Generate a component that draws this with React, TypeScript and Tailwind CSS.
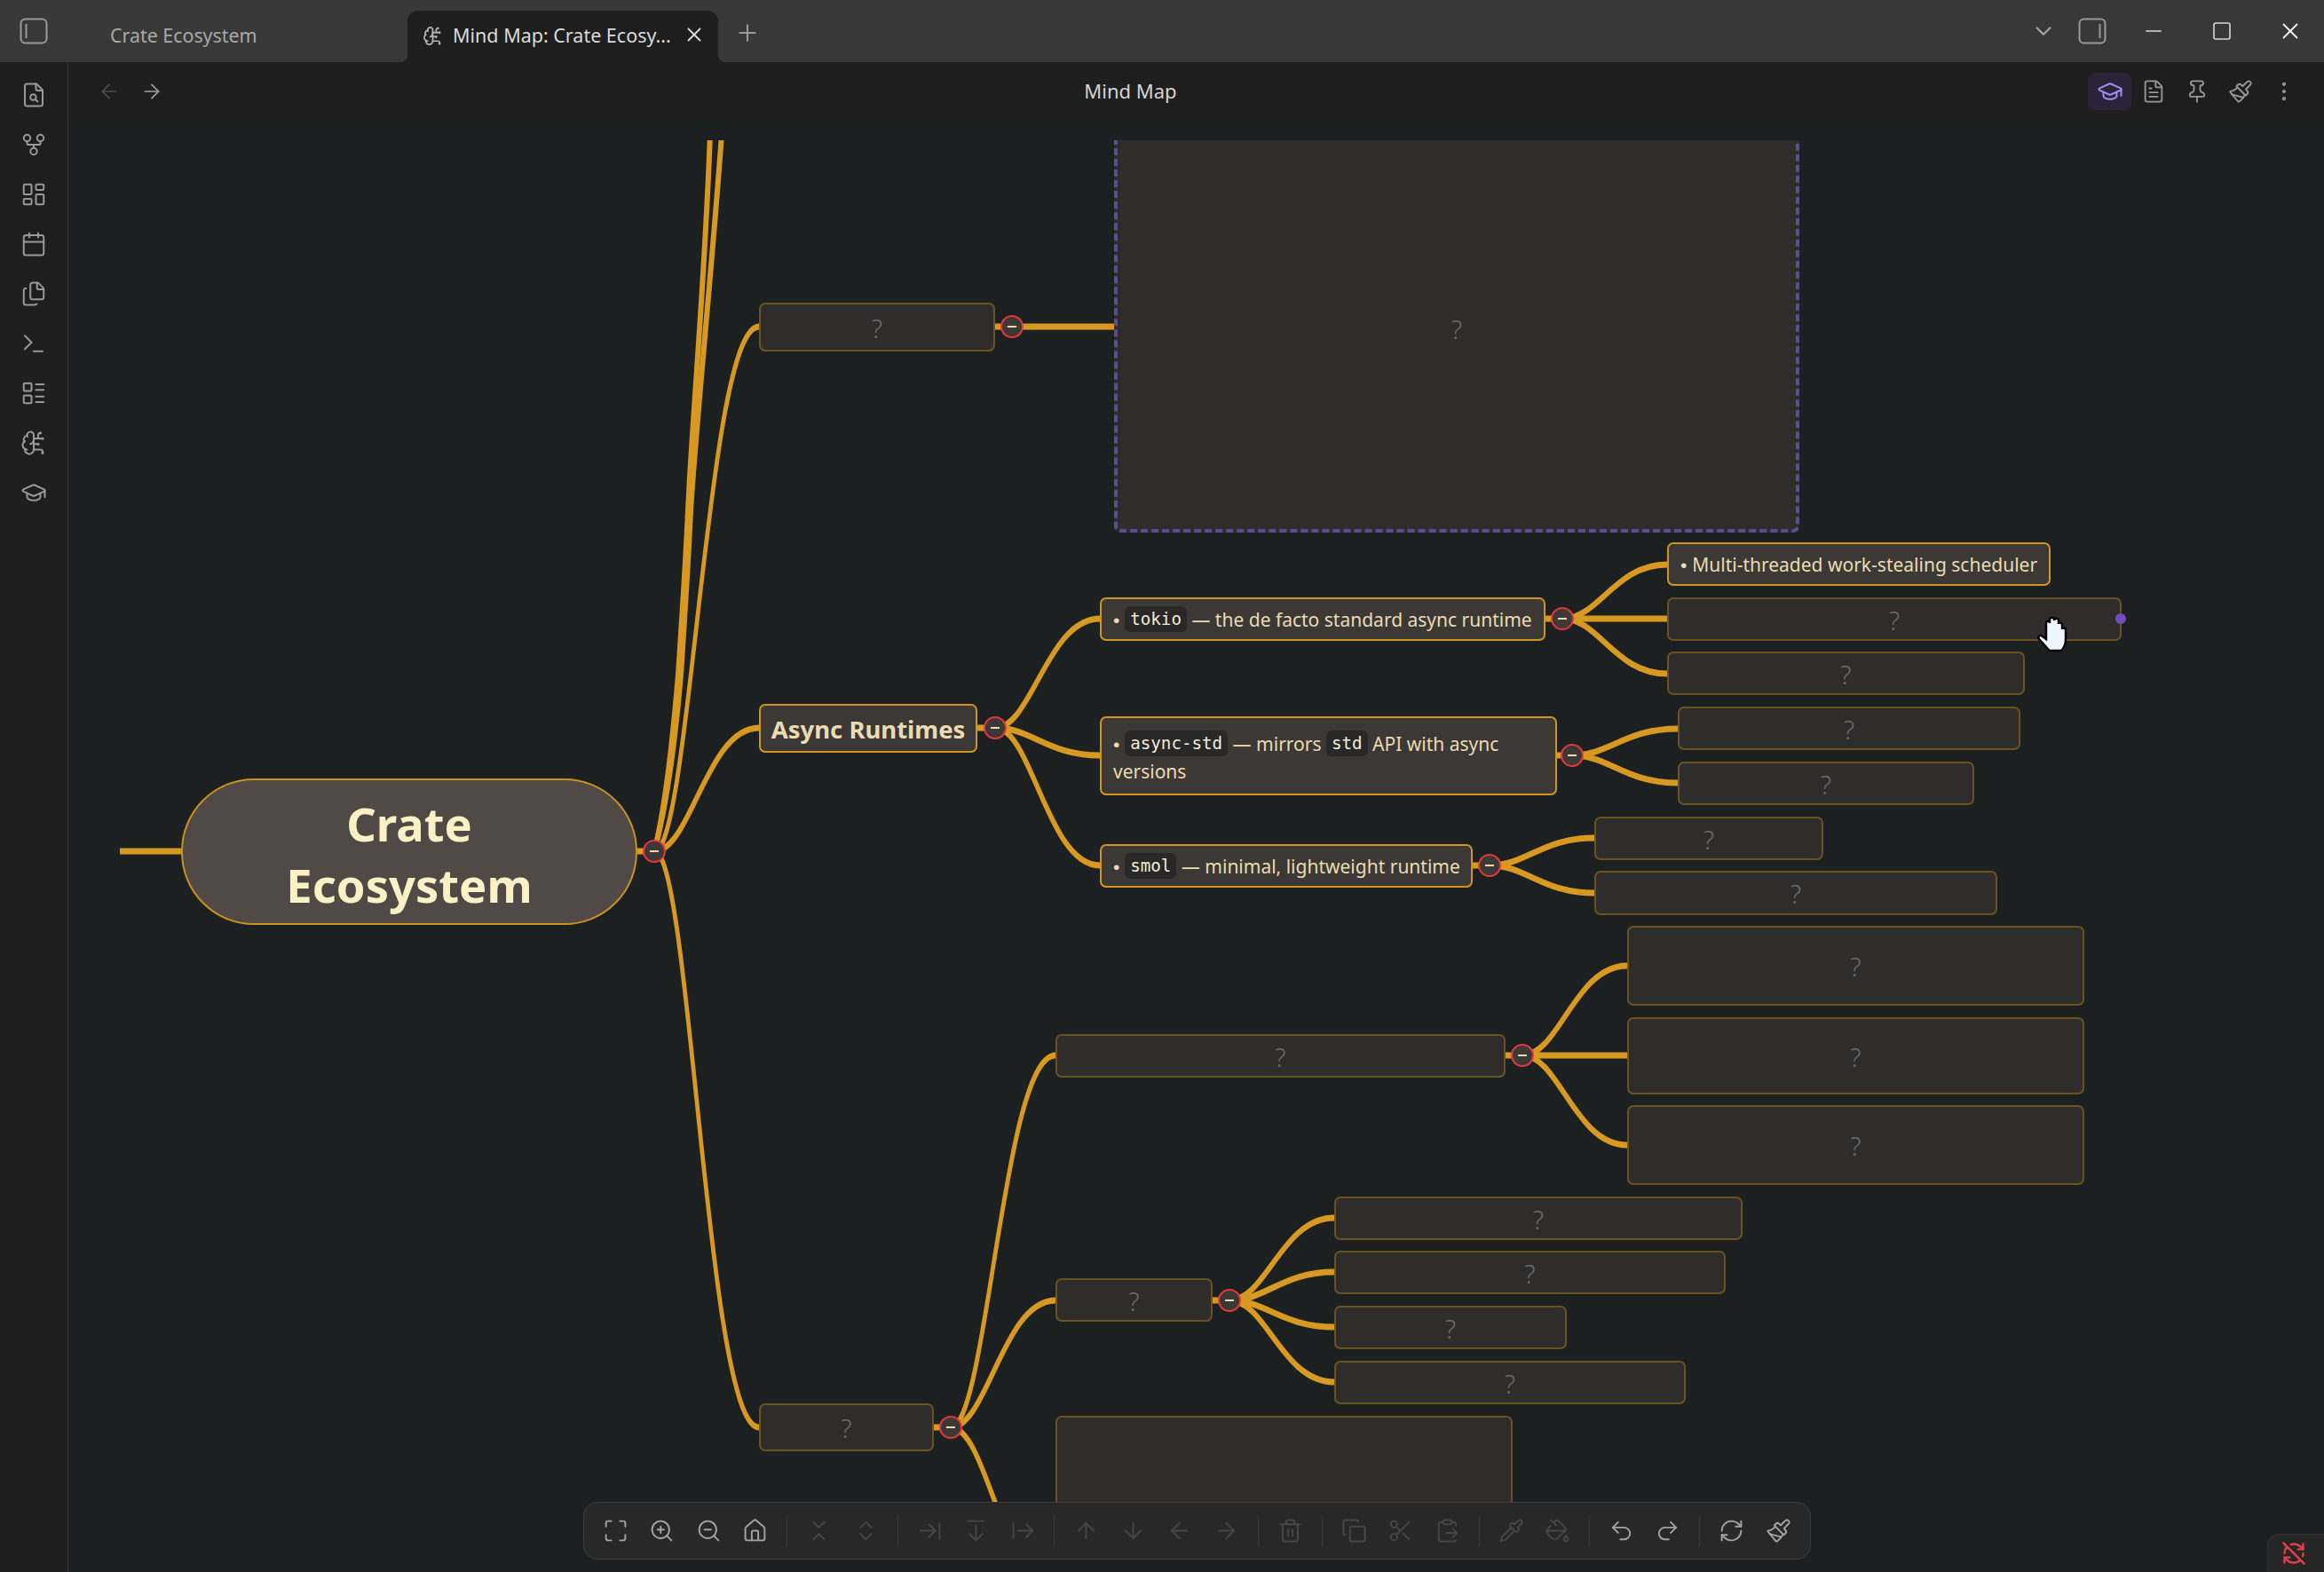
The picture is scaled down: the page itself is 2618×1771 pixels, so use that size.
import React from 'react';
import {
  ArrowDown, ArrowDownFromLine, ArrowLeft, ArrowRight, ArrowRightFromLine, ArrowRightToLine, ArrowUp,
  BrainCircuit, Calendar, ChevronDown, ChevronsDownUp, ChevronsUpDown, ClipboardPaste, Copy, EllipsisVertical,
  FileText, Files, GitFork, GraduationCap, House, LayoutDashboard, LayoutList, Maximize, Minus,
  PaintBucket, Paintbrush, Pin, Pipette, Plus, Redo2, RefreshCw, RefreshCwOff, Scissors, Square, Terminal,
  Trash2, Undo2, X, ZoomIn, ZoomOut,
} from 'lucide-react';

const GOLD = '#d79921';
const MAP_X = 77;
const MAP_Y = 158;

type Box = { x0: number; y0: number; x1: number; y1: number; big?: boolean };

// hidden flash-card nodes, page coordinates
const hidden: Box[] = [
  { x0: 855, y0: 341, x1: 1121, y1: 396 },
  { x0: 1878, y0: 673, x1: 2390, y1: 722 },
  { x0: 1878, y0: 734, x1: 2281, y1: 783 },
  { x0: 1890, y0: 796, x1: 2276, y1: 845 },
  { x0: 1890, y0: 858, x1: 2224, y1: 907 },
  { x0: 1796, y0: 920, x1: 2054, y1: 969 },
  { x0: 1796, y0: 981, x1: 2250, y1: 1031 },
  { x0: 1189, y0: 1165, x1: 1696, y1: 1214 },
  { x0: 1833, y0: 1043, x1: 2348, y1: 1133 },
  { x0: 1833, y0: 1146, x1: 2348, y1: 1233 },
  { x0: 1833, y0: 1245, x1: 2348, y1: 1335 },
  { x0: 1189, y0: 1440, x1: 1366, y1: 1489 },
  { x0: 1503, y0: 1348, x1: 1963, y1: 1397 },
  { x0: 1503, y0: 1409, x1: 1944, y1: 1458 },
  { x0: 1503, y0: 1471, x1: 1765, y1: 1520 },
  { x0: 1503, y0: 1533, x1: 1899, y1: 1582 },
  { x0: 855, y0: 1581, x1: 1052, y1: 1635 },
];

const branches: [number, number, number, number][] = [
  [737, 959, 855, 368],
  [737, 959, 855, 820],
  [737, 959, 855, 1608],
  [1121, 820, 1239, 697],
  [1121, 820, 1239, 851],
  [1121, 820, 1239, 975],
  [1760, 697, 1878, 636],
  [1760, 697, 1878, 697],
  [1760, 697, 1878, 759],
  [1771, 851, 1890, 821],
  [1771, 851, 1890, 882],
  [1678, 975, 1796, 944],
  [1678, 975, 1796, 1006],
  [1071, 1608, 1189, 1189],
  [1071, 1608, 1189, 1465],
  [1071, 1608, 1189, 1790],
  [1715, 1189, 1833, 1088],
  [1715, 1189, 1833, 1189],
  [1715, 1189, 1833, 1290],
  [1385, 1465, 1503, 1372],
  [1385, 1465, 1503, 1433],
  [1385, 1465, 1503, 1495],
  [1385, 1465, 1503, 1557],
];

// short straight bits: node edge to its fold button
const stubs: [number, number, number][] = [
  [135, 204, 959], [718, 737, 959], [1121, 1257, 368], [1101, 1121, 820], [1741, 1760, 697],
  [1753, 1771, 851], [1659, 1678, 975], [1052, 1071, 1608], [1696, 1715, 1189], [1366, 1385, 1465],
];

const folds: [number, number][] = [
  [737, 959], [1140, 368], [1121, 820], [1760, 697], [1771, 851], [1678, 975], [1071, 1608], [1715, 1189], [1385, 1465],
];

const curve = (x0: number, y0: number, x1: number, y1: number) => {
  const dx = x1 - x0;
  const c0 = x0 + dx * 0.35;
  const c1 = x1 - dx * 0.5;
  const t = 1.25;
  return `M${x0} ${y0 - t}C${c0} ${y0 - t} ${c1} ${y1 - t} ${x1} ${y1 - t}L${x1} ${y1 + t}C${c1} ${y1 + t} ${c0} ${y0 + t} ${x0} ${y0 + t}Z`;
};

const place = (b: Box) => ({
  left: b.x0 - MAP_X,
  top: b.y0 - MAP_Y,
  width: b.x1 - b.x0,
  height: b.y1 - b.y0,
});

const Code = ({ children }: { children: React.ReactNode }) => (
  <code className="inline-block h-[29px] rounded-[6px] bg-[#282828] px-[6px] align-top font-['DejaVu_Sans_Mono',monospace] text-[19.2px] leading-[29px] text-[#f2ebd5]">
    {children}
  </code>
);

const Bullet = () => <span className="font-['Liberation_Sans',sans-serif]">• </span>;

const Hidden = ({ box }: { box: Box }) => (
  <div
    style={place(box)}
    className="absolute flex items-center justify-center rounded-[7px] border-2 border-[#6a5320] bg-[#2e2d2b] pt-[2px] text-[29px] font-light text-[#6a6a6a]"
  >
    ?
  </div>
);

const Node = ({ box, className, children }: { box: Box; className?: string; children: React.ReactNode }) => (
  <div
    style={place(box)}
    className={`absolute rounded-[7px] border-2 border-[#cf9520] bg-[#3c3836] text-[#ebdbb2] ${className ?? ''}`}
  >
    {children}
  </div>
);

const PanelIcon = ({ right }: { right?: boolean }) => (
  <svg width="32" height="30" viewBox="0 0 32 30" fill="none" stroke="#999" strokeWidth="2">
    <rect x="1.5" y="1.5" width="29" height="27" rx="5" />
    <path d={right ? 'M24.5 7v16' : 'M7.5 7v16'} />
  </svg>
);

const FileSearchIcon = () => (
  <svg width="30" height="30" viewBox="0 0 24 24" fill="none" stroke="#999" strokeWidth="1.6" strokeLinecap="round" strokeLinejoin="round">
    <path d="M6 2h8.5L20 7.5V20a2 2 0 0 1-2 2H6a2 2 0 0 1-2-2V4a2 2 0 0 1 2-2Z" />
    <path d="M14 2v4a2 2 0 0 0 2 2h4" />
    <circle cx="11.5" cy="14" r="2.6" />
    <path d="M13.5 16l2 2" />
  </svg>
);

const sideIcons = [GitFork, LayoutDashboard, Calendar, Files, Terminal, LayoutList, BrainCircuit, GraduationCap];

const Tool = ({ icon: Icon, off }: { icon: typeof X; off?: boolean }) => (
  <div className="flex h-full w-[52.5px] items-center justify-center">
    <Icon size={29} strokeWidth={1.6} className={off ? 'text-[#474747]' : 'text-[#a3a3a3]'} />
  </div>
);

const Sep = () => <div className="mx-[9.2px] h-[35px] w-px bg-[#3a3a3a]" />;

export default function App() {
  return (
    <div className="relative flex h-[1771px] w-[2618px] flex-col overflow-hidden bg-[#1e1e1e] font-['Noto_Sans',sans-serif]">
      {/* title bar */}
      <div className="flex h-[70px] shrink-0 bg-[#383838]">
        <div className="flex w-[76px] items-center justify-center">
          <PanelIcon />
        </div>
        <div className="w-[383px] pl-[48px] pt-[23px] text-[21.4px] leading-[34px] text-[#a8a8a8]">Crate Ecosystem</div>
        <div className="relative mt-[12px] flex h-[58px] w-[350px] items-center rounded-t-[12px] bg-[#1e1e1e] pb-[1px] pl-[17px]">
          <div className="absolute bottom-0 left-[-8px] h-[8px] w-[8px] bg-[radial-gradient(circle_at_0_0,transparent_8px,#1e1e1e_8px)]" />
          <div className="absolute bottom-0 right-[-8px] h-[8px] w-[8px] bg-[radial-gradient(circle_at_100%_0,transparent_8px,#1e1e1e_8px)]" />
          <BrainCircuit size={23} strokeWidth={1.8} className="shrink-0 text-[#b5b5b5]" />
          <span className="ml-[11px] whitespace-nowrap text-[21.5px] text-[#dadada]">Mind Map: Crate Ecosy...</span>
          <X size={26} strokeWidth={1.7} className="absolute left-[310px] top-[14px] text-[#dadada]" />
        </div>
        <div className="flex w-[66px] items-center justify-center pt-[3px]">
          <Plus size={30} strokeWidth={1.6} className="text-[#9a9a9a]" />
        </div>
        <div className="flex-1" />
        <div className="flex w-[50px] items-center justify-center">
          <ChevronDown size={30} strokeWidth={1.6} className="text-[#a8a8a8]" />
        </div>
        <div className="flex w-[60px] items-center justify-center">
          <PanelIcon right />
        </div>
        <div className="flex w-[77px] items-center justify-center">
          <Minus size={28} strokeWidth={1.4} className="text-[#d8d8d8]" />
        </div>
        <div className="flex w-[77px] items-center justify-center">
          <Square size={24} strokeWidth={1.6} absoluteStrokeWidth className="text-[#d8d8d8]" />
        </div>
        <div className="flex w-[77px] items-center justify-center">
          <X size={30} strokeWidth={1.5} className="text-[#eeeeee]" />
        </div>
      </div>

      <div className="flex min-h-0 flex-1">
        {/* ribbon */}
        <div className="flex w-[77px] shrink-0 flex-col items-center border-r border-[#363636] bg-[#1e1e1e] pt-[9px] pr-px">
          <div className="flex h-[56px] items-center justify-center">
            <FileSearchIcon />
          </div>
          {sideIcons.map((Icon, i) => (
            <div key={i} className="flex h-[56px] items-center justify-center">
              <Icon size={30} strokeWidth={1.6} className="text-[#999999]" />
            </div>
          ))}
        </div>

        <div className="relative flex min-w-0 flex-1 flex-col">
          {/* view header */}
          <div className="flex h-[65px] shrink-0 items-center bg-[#1e1e1e] pl-[22px] pr-[21px]">
            <div className="flex w-[48px] justify-center">
              <ArrowLeft size={26} strokeWidth={1.6} className="text-[#4e4e4e]" />
            </div>
            <div className="flex w-[48px] justify-center">
              <ArrowRight size={26} strokeWidth={1.6} className="text-[#a0a0a0]" />
            </div>
            <div className="flex-1 text-center text-[22px] text-[#d4d4d4]">Mind Map</div>
            <div className="flex h-[42px] w-[49px] items-center justify-center rounded-[8px] bg-[#2a2438]">
              <GraduationCap size={30} strokeWidth={1.6} className="text-[#a68af9]" />
            </div>
            {[FileText, Pin, Paintbrush, EllipsisVertical].map((Icon, i) => (
              <div key={i} className="flex w-[49px] justify-center">
                <Icon size={28} strokeWidth={1.6} className="text-[#999999]" />
              </div>
            ))}
          </div>

          {/* mind map canvas */}
          <div className="relative min-h-0 flex-1 bg-[#1d2021]">
            <div className="absolute left-0 right-0 top-[23px] h-[1542px] overflow-hidden">
              <svg className="absolute left-0 top-0" width="2541" height="1542" viewBox="77 158 2541 1542">
                <g fill={GOLD} stroke={GOLD} strokeWidth="4.5">
                  {branches.map(([a, b, c, d], i) => (
                    <path key={i} d={curve(a, b, c, d)} />
                  ))}
                </g>
                {stubs.map(([a, b, y], i) => (
                  <rect key={i} x={a} y={y - 3.5} width={b - a} height="7" fill={GOLD} />
                ))}
                <g fill="none" stroke={GOLD} strokeWidth="6">
                  <path d="M737 959C751 905 759 820 764 760C768 700 772 640 775 576C779 480 794 320 800 150" />
                  <path d="M737 959C752 905 762 820 767 760C771 700 775 640 778 576C783 490 805 270 813 150" />
                </g>
              </svg>

              {/* flash-card box being revealed */}
              <div
                style={place({ x0: 1255, y0: 139, x1: 2027, y1: 600 })}
                className="absolute flex items-center justify-center rounded-[7px] border-4 border-dashed border-[#5b4e8c] bg-[#2e2d2b] pt-[2px] text-[29px] font-light text-[#6a6a6a]"
              >
                ?
              </div>

              {hidden.map((b, i) => (
                <Hidden key={i} box={b} />
              ))}
              <div
                style={place({ x0: 1189, y0: 1595, x1: 1704, y1: 1760 })}
                className="absolute rounded-[7px] border-2 border-[#6a5320] bg-[#2e2d2b]"
              />

              <div
                style={place({ x0: 204, y0: 877, x1: 718, y1: 1042 })}
                className="absolute flex items-center justify-center rounded-[82px] border-2 border-[#c9921f] bg-[#504945] pt-[5px] text-center text-[52.5px] font-bold leading-[69px] text-[#fbf1c7]"
              >
                <span className="w-[360px]">Crate Ecosystem</span>
              </div>

              <Node box={{ x0: 855, y0: 793, x1: 1101, y1: 848 }} className="flex items-center justify-center pt-[2px] text-[27.5px] font-bold">
                Async Runtimes
              </Node>
              <Node box={{ x0: 1239, y0: 673, x1: 1741, y1: 722 }} className="whitespace-nowrap pl-[13px] pt-[8px] text-[21px] leading-[31px]">
                <Bullet /><Code>tokio</Code> — the de facto standard async runtime
              </Node>
              <Node box={{ x0: 1239, y0: 807, x1: 1754, y1: 896 }} className="pl-[13px] pt-[14px] text-[21px] leading-[31px]">
                <Bullet /><Code>async-std</Code> — mirrors <Code>std</Code> API with async versions
              </Node>
              <Node box={{ x0: 1239, y0: 951, x1: 1659, y1: 1000 }} className="whitespace-nowrap pl-[13px] pt-[8px] text-[21px] leading-[31px]">
                <Bullet /><Code>smol</Code> — minimal, lightweight runtime
              </Node>
              <Node box={{ x0: 1878, y0: 611, x1: 2310, y1: 660 }} className="whitespace-nowrap pl-[13px] pt-[8px] text-[21px] leading-[31px]">
                <Bullet />Multi-threaded work-stealing scheduler
              </Node>

              {folds.map(([x, y], i) => (
                <div
                  key={i}
                  style={{ left: x - MAP_X - 13, top: y - MAP_Y - 13 }}
                  className="absolute flex h-[26px] w-[26px] items-center justify-center rounded-full border-2 border-[#e5383b] bg-[#3c3836]"
                >
                  <div className="h-[2px] w-[10px] bg-[#ebdbb2]" />
                </div>
              ))}

              <div className="absolute left-[2306px] top-[533px] h-[12px] w-[12px] rounded-full bg-[#6f4fc0]" />

              {/* mouse pointer */}
              <svg className="absolute left-[2217px] top-[535px]" width="40" height="42" viewBox="0 0 40 42">
                <path
                  d="M13 38L3 27C1 24 4 22 7 24L11 27V9C11 6 15 6 15 9V5C15 2 20 2 20 5V6C20 3 25 3 25 6V10C25 8 29 8 29 11V16C29 14 33 14 33 17V27C33 33 30 38 28 40H15Z"
                  fill="#eef5fc"
                  stroke="#000"
                  strokeWidth="2.4"
                />
              </svg>
            </div>

            {/* bottom toolbar */}
            <div className="absolute bottom-[14px] left-[580px] flex h-[65px] items-center rounded-[16px] border border-[#3d3d3d] bg-[#282828] pl-[9px]">
              <Tool icon={Maximize} />
              <Tool icon={ZoomIn} />
              <Tool icon={ZoomOut} />
              <Tool icon={House} />
              <Sep />
              <Tool icon={ChevronsDownUp} off />
              <Tool icon={ChevronsUpDown} off />
              <Sep />
              <Tool icon={ArrowRightToLine} off />
              <Tool icon={ArrowDownFromLine} off />
              <Tool icon={ArrowRightFromLine} off />
              <Sep />
              <Tool icon={ArrowUp} off />
              <Tool icon={ArrowDown} off />
              <Tool icon={ArrowLeft} off />
              <Tool icon={ArrowRight} off />
              <Sep />
              <Tool icon={Trash2} off />
              <Sep />
              <Tool icon={Copy} off />
              <Tool icon={Scissors} off />
              <Tool icon={ClipboardPaste} off />
              <Sep />
              <Tool icon={Pipette} off />
              <Tool icon={PaintBucket} off />
              <Sep />
              <Tool icon={Undo2} />
              <Tool icon={Redo2} />
              <Sep />
              <Tool icon={RefreshCw} />
              <Tool icon={Paintbrush} />
              <div className="w-[9px]" />
            </div>

            {/* sync status */}
            <div className="absolute bottom-0 right-0 flex h-[43px] w-[64px] items-center justify-center rounded-tl-[14px] border-l border-t border-[#333333] bg-[#262626] pr-[6px]">
              <RefreshCwOff size={28} strokeWidth={2} className="text-[#e5404a]" />
            </div>
          </div>
        </div>
      </div>
    </div>
  );
}
